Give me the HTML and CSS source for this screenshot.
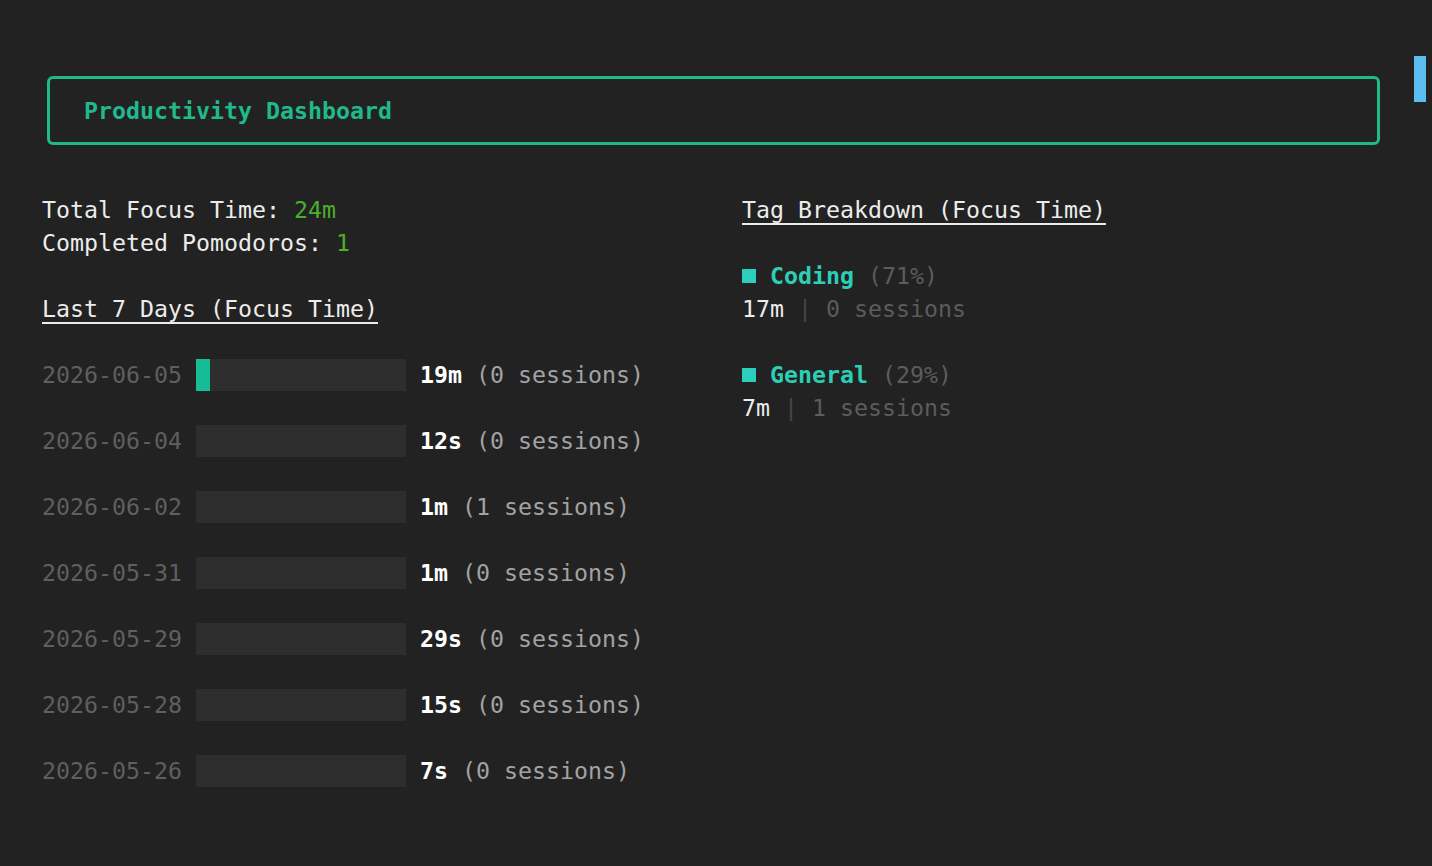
FILE: index.html
```html
<!DOCTYPE html>
<html>
<head lang="en">
    <meta charset="UTF-8">
    <title>Productivity Dashboard</title>
    <link rel="stylesheet" href="styles.css">
</head>
<body>
    <div id="app">
        <div class="title-box">Productivity Dashboard</div>
        <div class="columns">
            <div class="left">
                <div class="line">Total Focus Time: <span class="good">24m</span></div>
                <div class="line">Completed Pomodoros: <span class="good">1</span></div>
                <div class="heading">Last 7 Days (Focus Time)</div>
                <div class="days">
                    <div class="day">
                        <span class="date">2026-06-05</span>
                        <span class="bar"><span class="fill" style="width: 14px"></span></span>
                        <span class="amount">19m</span><span class="sess">(0 sessions)</span>
                    </div>
                    <div class="day">
                        <span class="date">2026-06-04</span>
                        <span class="bar"></span>
                        <span class="amount">12s</span><span class="sess">(0 sessions)</span>
                    </div>
                    <div class="day">
                        <span class="date">2026-06-02</span>
                        <span class="bar"></span>
                        <span class="amount">1m</span><span class="sess">(1 sessions)</span>
                    </div>
                    <div class="day">
                        <span class="date">2026-05-31</span>
                        <span class="bar"></span>
                        <span class="amount">1m</span><span class="sess">(0 sessions)</span>
                    </div>
                    <div class="day">
                        <span class="date">2026-05-29</span>
                        <span class="bar"></span>
                        <span class="amount">29s</span><span class="sess">(0 sessions)</span>
                    </div>
                    <div class="day">
                        <span class="date">2026-05-28</span>
                        <span class="bar"></span>
                        <span class="amount">15s</span><span class="sess">(0 sessions)</span>
                    </div>
                    <div class="day">
                        <span class="date">2026-05-26</span>
                        <span class="bar"></span>
                        <span class="amount">7s</span><span class="sess">(0 sessions)</span>
                    </div>
                </div>
            </div>
            <div class="right">
                <div class="heading">Tag Breakdown (Focus Time)</div>
                <div class="tag">
                    <div class="line"><span class="dot"></span><span class="tag-name">Coding</span> <span class="muted">(71%)</span></div>
                    <div class="line">17m <span class="pipe">|</span> <span class="muted">0 sessions</span></div>
                </div>
                <div class="tag">
                    <div class="line"><span class="dot"></span><span class="tag-name">General</span> <span class="muted">(29%)</span></div>
                    <div class="line">7m <span class="pipe">|</span> <span class="muted">1 sessions</span></div>
                </div>
            </div>
        </div>
    </div>
    <div class="scroll-thumb"></div>
</body>
</html>
```

FILE: styles.css
```css
*{
    padding: 0;
    margin: 0;
    box-sizing: border-box;
}
html, body{
    height: 100%;
}
body{
    background: #222222;
    color: #ececec;
    font-family: "DejaVu Sans Mono", "Liberation Mono", monospace;
    font-size: 23.25px;
    line-height: 33px;
}
#app{
    padding: 76px 52px 0 42px;
}
.title-box, .line, .heading, .sess{
    white-space: pre;
}
.title-box{
    margin: 0 0 48px 5px;
    border: 3px solid #1fb98c;
    border-radius: 6px;
    padding: 15px 34px;
    color: #1fb98c;
    font-weight: bold;
}
.columns{
    display: grid;
    grid-template-columns: 700px 1fr;
}
.good{
    color: #4caf2c;
}
.heading{
    text-decoration: underline;
    text-decoration-thickness: 2px;
    text-underline-offset: 5px;
    margin-bottom: 33px;
}
.left .heading{
    margin-top: 33px;
}
.days{
    display: flex;
    flex-direction: column;
    gap: 33px;
}
.day{
    display: flex;
    align-items: center;
    height: 33px;
}
.date{
    color: #5f5f5f;
    margin-right: 14px;
}
.bar{
    width: 210px;
    height: 32px;
    background: #2e2e2e;
    margin-right: 14px;
    display: flex;
}
.fill{
    background: #14bd93;
    height: 100%;
}
.amount{
    color: #ffffff;
    font-weight: bold;
    margin-right: 14px;
}
.sess{
    color: #a3a3a3;
}
.tag{
    margin-bottom: 33px;
}
.dot{
    display: inline-block;
    width: 14px;
    height: 14px;
    background: #2ccfbd;
    margin-right: 14px;
    vertical-align: 1px;
}
.tag-name{
    color: #2ccfb6;
    font-weight: bold;
}
.muted{
    color: #5c5c5c;
}
.pipe{
    color: #464646;
}
.scroll-thumb{
    position: fixed;
    top: 56px;
    right: 6px;
    width: 12px;
    height: 46px;
    background: #5bbdf0;
}
```
